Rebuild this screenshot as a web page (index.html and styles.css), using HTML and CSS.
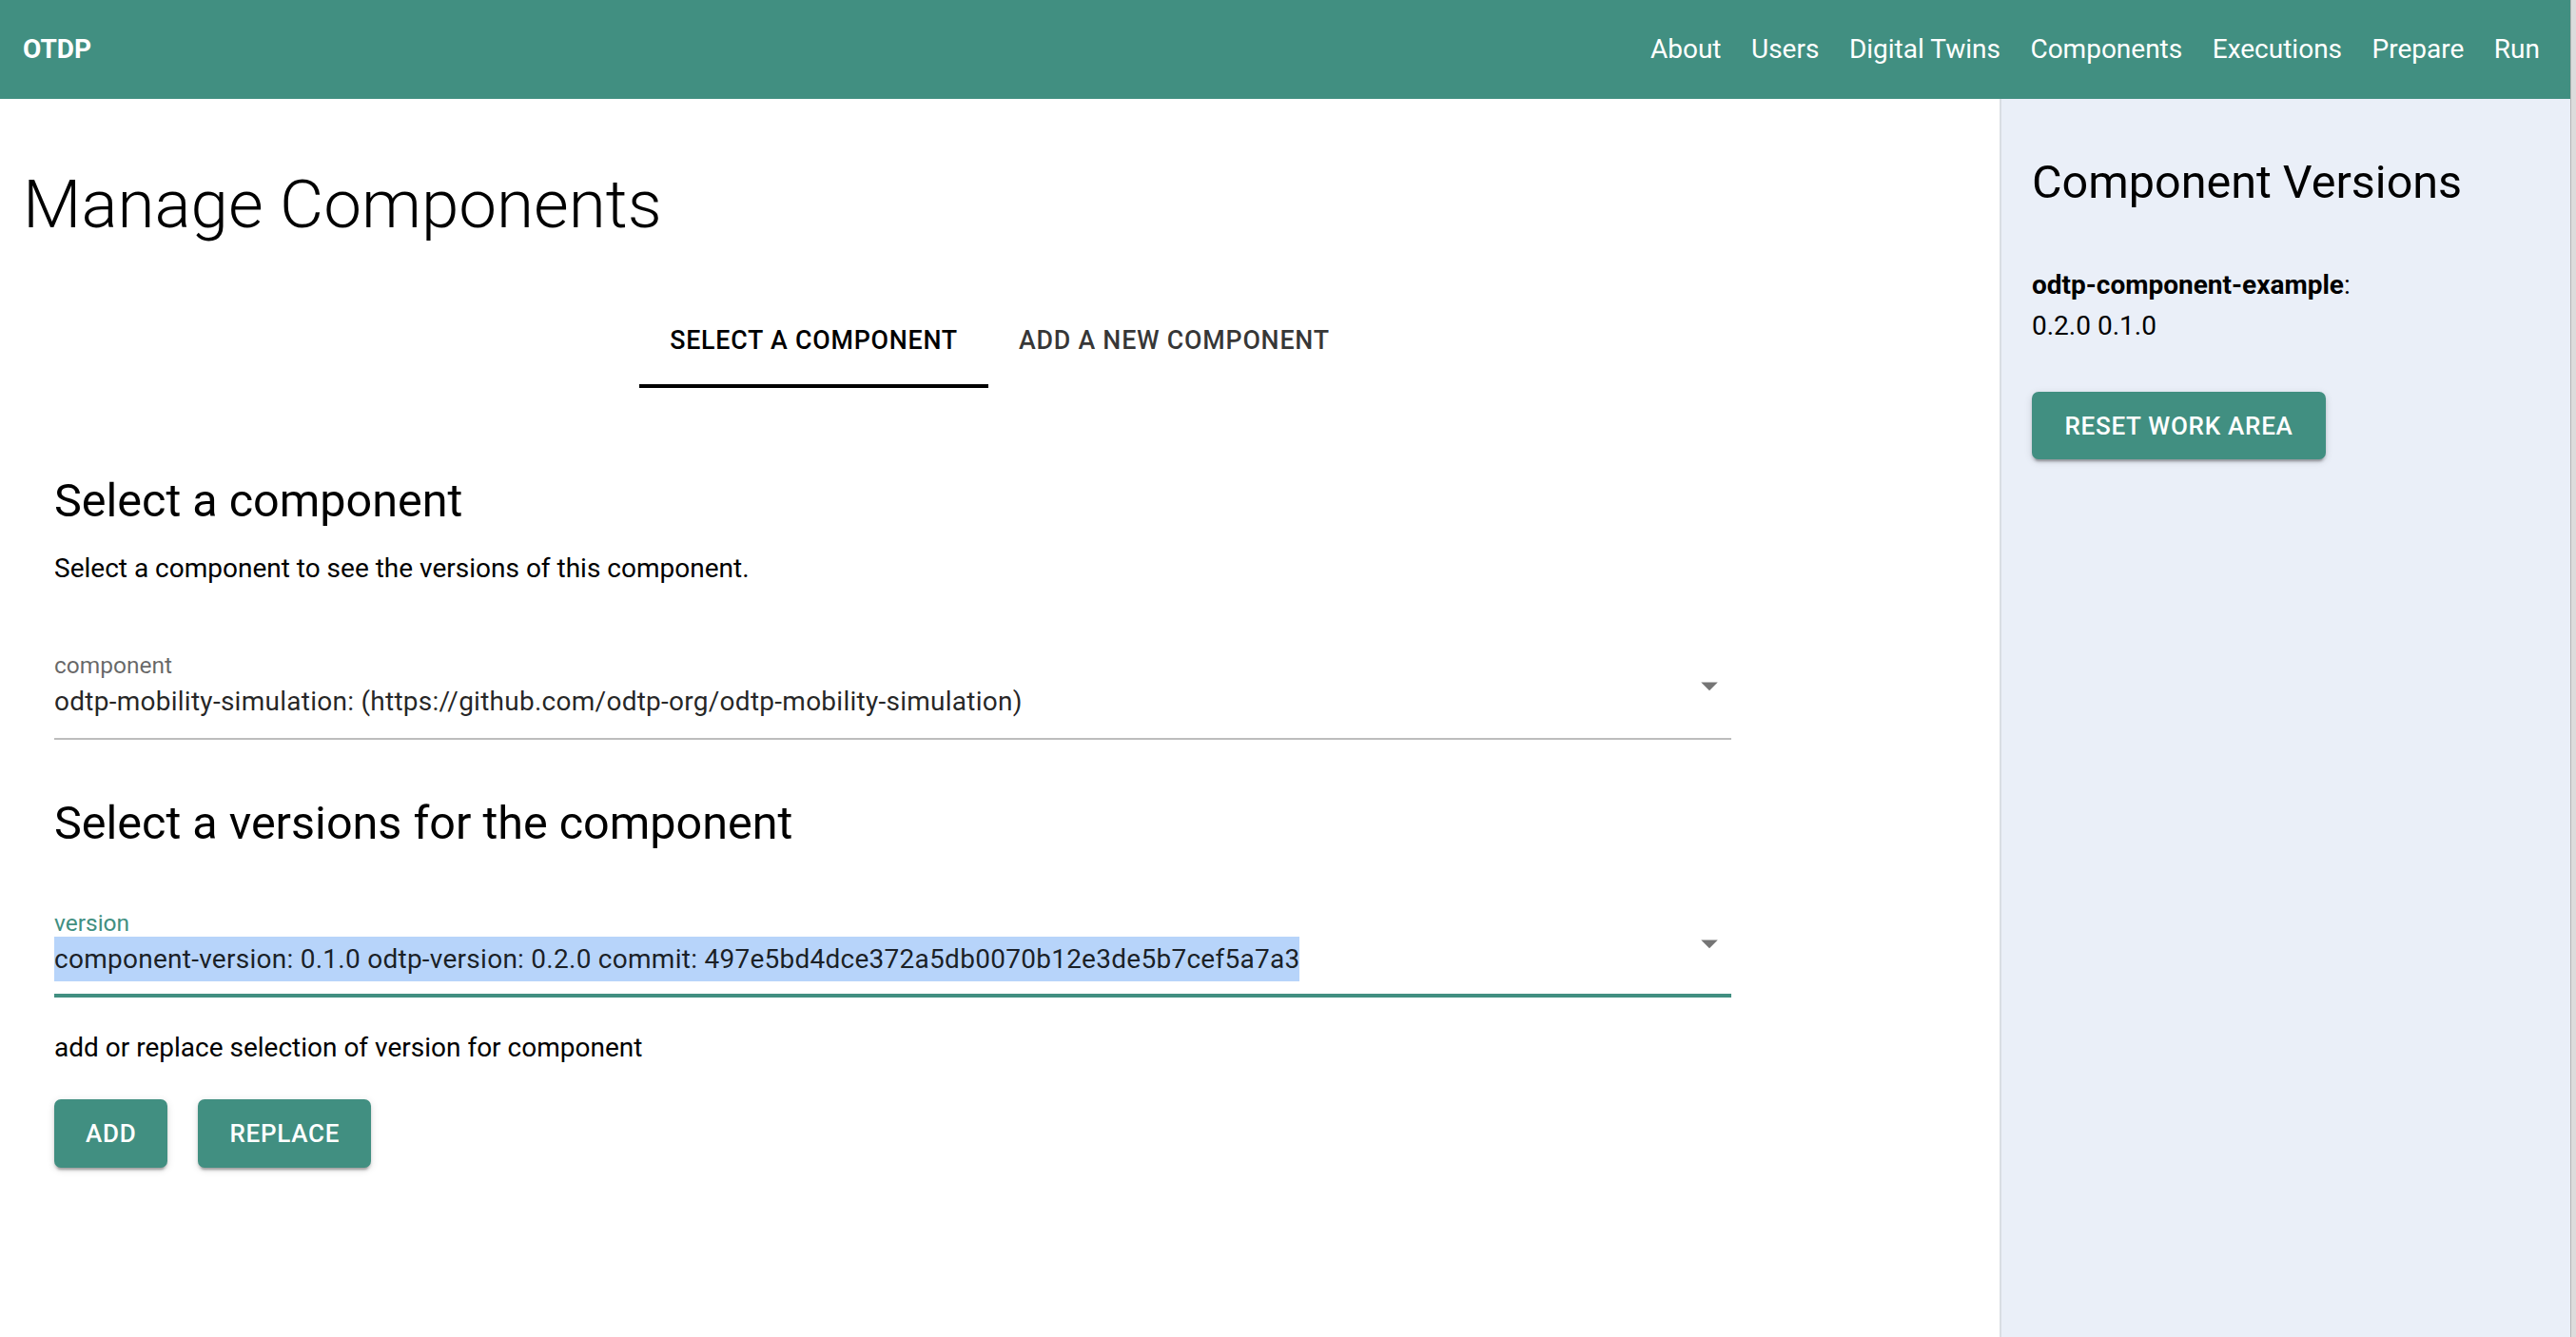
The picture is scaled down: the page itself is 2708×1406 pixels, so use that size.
FILE: index.html
```html
<!DOCTYPE html>
<html lang="en">
<head>
<meta charset="utf-8">
<title>OTDP - Manage Components</title>
<link rel="stylesheet" href="styles.css">
</head>
<body>
<div class="screen">
  <div class="window">
    <header class="topbar">
      <div class="brand">OTDP</div>
      <nav class="nav">
        <a class="nav-link">About</a>
        <a class="nav-link">Users</a>
        <a class="nav-link">Digital Twins</a>
        <a class="nav-link">Components</a>
        <a class="nav-link">Executions</a>
        <a class="nav-link">Prepare</a>
        <a class="nav-link">Run</a>
      </nav>
    </header>
    <div class="content">
      <main class="main">
        <h1 class="page-title">Manage Components</h1>
        <div class="tabs">
          <div class="tab tab-active">Select a component</div>
          <div class="tab">Add a new component</div>
        </div>
        <section class="panel">
          <h2 class="section-title">Select a component</h2>
          <p class="body-text">Select a component to see the versions of this component.</p>
          <div class="select select-first">
            <div class="select-label">component</div>
            <div class="select-value">
              <span class="value-text">odtp-mobility-simulation: (https://github.com/odtp-org/odtp-mobility-simulation)</span>
              <svg class="arrow" viewBox="0 0 24 24" width="42" height="42"><path d="M7 10l5 5 5-5z" fill="#757575"/></svg>
            </div>
          </div>
          <h2 class="section-title section-title-2">Select a versions for the component</h2>
          <div class="select select-focused">
            <div class="select-label">version</div>
            <div class="select-value">
              <span class="value-text highlighted">component-version: 0.1.0 odtp-version: 0.2.0 commit: 497e5bd4dce372a5db0070b12e3de5b7cef5a7a3</span>
              <svg class="arrow" viewBox="0 0 24 24" width="42" height="42"><path d="M7 10l5 5 5-5z" fill="#757575"/></svg>
            </div>
          </div>
          <p class="body-text hint">add or replace selection of version for component</p>
          <div class="actions">
            <button class="btn">Add</button>
            <button class="btn">Replace</button>
          </div>
        </section>
      </main>
      <aside class="sidebar">
        <h2 class="side-title">Component Versions</h2>
        <div class="side-list">
          <div class="side-line"><b>odtp-component-example</b>:</div>
          <div class="side-line">0.2.0 0.1.0</div>
        </div>
        <button class="btn btn-reset">Reset work area</button>
      </aside>
    </div>
  </div>
  <div class="edge-strip"></div>
</div>
</body>
</html>
```

FILE: styles.css
```css
* { box-sizing: border-box; }

html, body {
  margin: 0;
  padding: 0;
}

body {
  font-family: Roboto, "Liberation Sans", Arial, sans-serif;
  color: rgba(0, 0, 0, 0.87);
  background: #ffffff;
}

.screen {
  display: flex;
  width: 2708px;
  height: 1406px;
  overflow: hidden;
}

.window {
  width: 2702px;
  display: flex;
  flex-direction: column;
}

.edge-strip {
  width: 6px;
  background: #dcdcdc;
  border-left: 1px solid #b5b5b5;
}

/* top bar */
.topbar {
  height: 104px;
  flex-shrink: 0;
  background: #418f81;
  color: #ffffff;
  display: flex;
  align-items: center;
  justify-content: space-between;
  padding: 0 32px 2px 24px;
}

.brand {
  font-weight: 700;
  font-size: 28px;
  letter-spacing: 0;
}

.nav {
  display: flex;
  gap: 31.5px;
}

.nav-link {
  font-size: 28px;
  font-weight: 400;
  color: #ffffff;
  text-decoration: none;
}

/* body */
.content {
  flex: 1;
  display: flex;
  min-height: 0;
}

.main {
  flex: 1;
  min-width: 0;
}

.page-title {
  margin: 69px 0 0 24px;
  font-size: 71px;
  line-height: 84px;
  font-weight: 300;
  color: #000;
}

.tabs {
  margin-top: 67px;
  display: flex;
  justify-content: center;
}

.tab {
  height: 84px;
  padding: 0 32px 12px;
  display: flex;
  align-items: center;
  font-size: 26.8px;
  font-weight: 500;
  text-transform: uppercase;
  letter-spacing: 0.02857em;
  color: rgba(0, 0, 0, 0.8);
  border-bottom: 4px solid transparent;
}

.tab-active {
  color: #000;
  border-bottom-color: #000;
}

.panel {
  padding-left: 57px;
  width: 1820px;
}

.section-title {
  margin: 89px 0 0;
  font-size: 48.5px;
  line-height: 60px;
  font-weight: 400;
  color: #000;
}

.section-title-2 {
  margin-top: 58px;
}

.body-text {
  margin: 20px 0 0;
  font-size: 28px;
  line-height: 42px;
  color: #000;
}

.select {
  margin-top: 68px;
}

.select-focused {
  margin-top: 62px;
}

.select-label {
  font-size: 24.5px;
  line-height: 26px;
  color: rgba(0, 0, 0, 0.6);
  margin-bottom: 1px;
}

.select-focused .select-label {
  color: #418f81;
}

.select-value {
  display: flex;
  justify-content: space-between;
  align-items: flex-start;
  padding-bottom: 15px;
  border-bottom: 2px solid #bdbdbd;
}

.select-focused .select-value {
  padding-bottom: 13px;
  border-bottom: 4px solid #418f81;
}

.value-text {
  font-size: 28px;
  line-height: 47px;
  letter-spacing: 0.00938em;
  color: rgba(0, 0, 0, 0.87);
  white-space: nowrap;
}

.highlighted {
  background: #b7d4fa;
}

.arrow {
  flex-shrink: 0;
  margin-top: -14px;
  margin-right: 2px;
}

.hint {
  margin-top: 32px;
}

.actions {
  margin-top: 33px;
  display: flex;
  gap: 32px;
}

.btn {
  height: 72px;
  padding: 0 33px;
  border: 0;
  border-radius: 7px;
  background: #418f81;
  color: #ffffff;
  font-family: Roboto, "Liberation Sans", Arial, sans-serif;
  font-size: 26px;
  font-weight: 500;
  letter-spacing: 0.02857em;
  text-transform: uppercase;
  box-shadow: 0 5px 2px -3px rgba(0, 0, 0, 0.2), 0 3px 3px 0 rgba(0, 0, 0, 0.14), 0 2px 9px 0 rgba(0, 0, 0, 0.12);
}

/* sidebar */
.sidebar {
  width: 600px;
  flex-shrink: 0;
  background: #eaeff8;
  border-left: 2px solid #d9dde3;
  padding: 58px 0 0 32px;
  display: flex;
  flex-direction: column;
  align-items: flex-start;
}

.side-title {
  margin: 0;
  font-size: 48.5px;
  line-height: 60px;
  font-weight: 400;
  color: #000;
}

.side-list {
  margin-top: 56px;
}

.side-line {
  font-size: 28px;
  line-height: 43px;
  color: #000;
}

.side-line b {
  font-weight: 700;
}

.btn-reset {
  margin-top: 48px;
  height: 71px;
  width: 309px;
  padding: 0;
}
```
